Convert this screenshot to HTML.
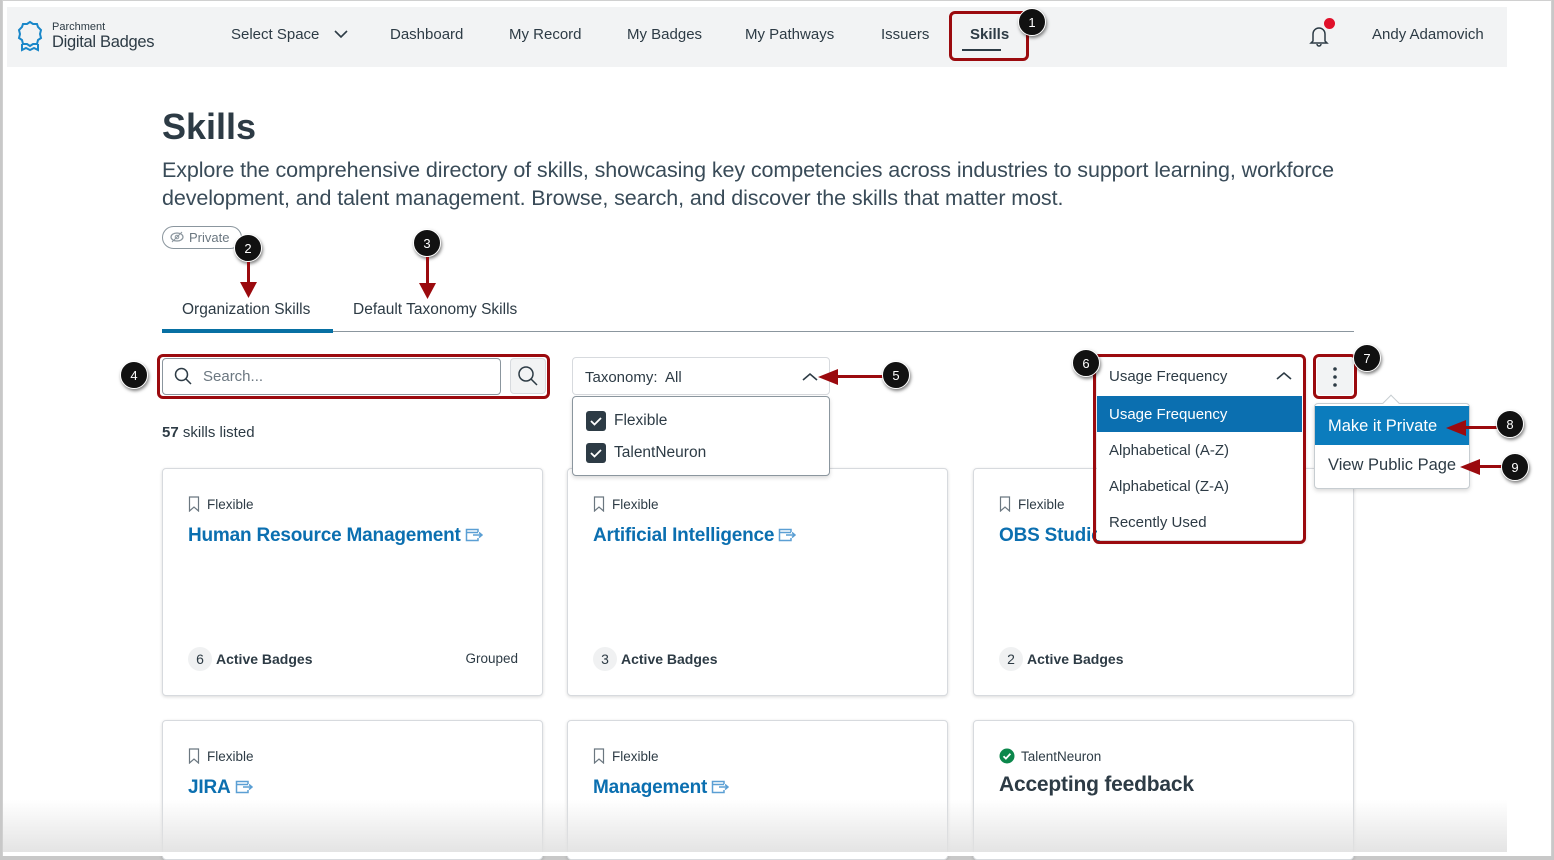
<!DOCTYPE html>
<html><head><meta charset="utf-8"><style>
*{box-sizing:border-box;margin:0;padding:0}
body{width:1554px;height:859px;overflow:hidden;background:#c8c8c8;font-family:"Liberation Sans",sans-serif;color:#2d3b45;position:relative}
.frame{position:absolute;left:2px;top:0;width:1550px;height:856px;background:#fff;border:1px solid #d0d0d0}
.a{position:absolute;white-space:nowrap}
.nav{position:absolute;left:7px;top:7px;width:1500px;height:60px;background:#f2f3f4}
.nl{position:absolute;top:26px;font-size:15px;color:#2d3b45}
.badge{position:absolute;width:28px;height:28px;border-radius:50%;background:#111;color:#fff;font-size:13px;text-align:center;line-height:28px;border:1.5px solid #fff;box-shadow:1px 2px 3px rgba(0,0,0,.5);z-index:8}
.red{position:absolute;border:3px solid #9b0a0e;border-radius:6px;z-index:4}
.card{position:absolute;width:381px;background:#fff;border:1px solid #d7dade;border-radius:4px;box-shadow:0 1px 3px rgba(0,0,0,.15)}
.tag{position:absolute;left:25px;top:27px;font-size:13.5px;color:#2d3b45}
.ttl{position:absolute;left:25px;top:56px;font-size:19px;font-weight:bold;color:#0b6fb0;white-space:nowrap;letter-spacing:-0.2px}
.cnt{position:absolute;left:25px;top:178px;font-size:14px;font-weight:bold}
.cnt b{display:inline-block;width:24px;height:24px;border-radius:50%;background:#f0f1f2;text-align:center;line-height:24px;font-weight:normal;margin-right:4px}
.bm{vertical-align:-3px;margin-right:7px}
.ext{vertical-align:-1px;margin-left:4px}
.arrow{position:absolute;background:#9b0a0e;z-index:8}
</style></head><body>
<div class="frame"></div>
<div class="nav"></div>
<svg class="a" style="left:16px;top:20px" width="28" height="32" viewBox="0 0 28 32"><path d="M14 2l3 2 4 0 1 3 3 3-1 4 1 4-3 2-1 4-4 0-3 2-3-2-4 0-1-4-3-2 1-4-1-4 3-3 1-3 4 0z" fill="none" stroke="#1a87c9" stroke-width="2"/><path d="M6 24v6l4-2 4 2 4-2 4 2v-6" fill="none" stroke="#1a87c9" stroke-width="2"/></svg>
<div class="a" style="left:52px;top:21px;font-size:11px">Parchment</div>
<div class="a" style="left:52px;top:33px;font-size:16.5px;color:#2d3b45;letter-spacing:-0.3px">Digital Badges</div>
<div class="nl" style="left:231px">Select Space</div>
<svg class="a" style="left:334px;top:29px" width="14" height="10"><path d="M1 2l6 6 6-6" fill="none" stroke="#2d3b45" stroke-width="1.6"/></svg>
<div class="nl" style="left:390px">Dashboard</div>
<div class="nl" style="left:509px">My Record</div>
<div class="nl" style="left:627px">My Badges</div>
<div class="nl" style="left:745px">My Pathways</div>
<div class="nl" style="left:881px">Issuers</div>
<div class="nl" style="left:970px;font-weight:bold">Skills</div>
<div class="a" style="left:962px;top:49px;width:39px;height:2px;background:#2d3b45"></div>
<div class="red" style="left:949px;top:11px;width:80px;height:50px"></div>
<div class="badge" style="left:1018px;top:8px">1</div>
<svg class="a" style="left:1308px;top:24px" width="22" height="24"><path d="M5 17V10a6 6 0 0112 0v7l2 2H3z M9 20a2 2 0 004 0" fill="none" stroke="#2d3b45" stroke-width="1.5"/></svg>
<div class="a" style="left:1324px;top:18px;width:11px;height:11px;border-radius:50%;background:#e0102a"></div>
<div class="nl" style="left:1372px">Andy Adamovich</div>

<div class="a" style="left:162px;top:106px;font-size:36px;font-weight:bold;color:#2d3b45">Skills</div>
<div class="a" style="left:162px;top:156px;font-size:21.5px;line-height:28px;color:#394b58;white-space:normal;width:1230px;letter-spacing:-0.1px">Explore the comprehensive directory of skills, showcasing key competencies across industries to support learning, workforce development, and talent management. Browse, search, and discover the skills that matter most.</div>
<div class="a" style="left:162px;top:226px;width:80px;height:23px;border:1px solid #8b969e;border-radius:12px;font-size:13px;color:#6b7780;padding:3px 0 0 26px">Private</div>
<svg class="a" style="left:170px;top:231px" width="14" height="12"><ellipse cx="7" cy="6" rx="6" ry="4" fill="none" stroke="#8b969e" stroke-width="1.2"/><circle cx="7" cy="6" r="1.8" fill="none" stroke="#8b969e"/><path d="M2 11L12 1" stroke="#8b969e"/></svg>
<div class="badge" style="left:234px;top:234px">2</div>
<div class="arrow" style="left:247px;top:262px;width:3px;height:24px"></div>
<svg class="a" style="left:240px;top:282px;z-index:8" width="17" height="16"><path d="M0 0h17L8.5 16z" fill="#9b0a0e"/></svg>
<div class="badge" style="left:413px;top:229px">3</div>
<div class="arrow" style="left:426px;top:257px;width:3px;height:28px"></div>
<svg class="a" style="left:419px;top:283px;z-index:8" width="17" height="16"><path d="M0 0h17L8.5 16z" fill="#9b0a0e"/></svg>
<div class="a" style="left:182px;top:301px;font-size:15.5px">Organization Skills</div>
<div class="a" style="left:353px;top:301px;font-size:15.5px">Default Taxonomy Skills</div>
<div class="a" style="left:162px;top:331px;width:1192px;height:1px;background:#8b969e"></div>
<div class="a" style="left:162px;top:329px;width:171px;height:4px;background:#0770a3"></div>

<div class="a" style="left:162px;top:358px;width:339px;height:37px;border:1px solid #8b969e;border-radius:4px"></div>
<svg class="a" style="left:174px;top:367px" width="18" height="18"><circle cx="7.5" cy="7.5" r="6" fill="none" stroke="#2d3b45" stroke-width="1.5"/><path d="M12 12l5 5" stroke="#2d3b45" stroke-width="1.5"/></svg>
<div class="a" style="left:203px;top:368px;font-size:15px;color:#6b7780">Search...</div>
<div class="a" style="left:510px;top:358px;width:36px;height:36px;background:#f2f3f4;border:1px solid #d7dade;border-radius:4px"></div>
<svg class="a" style="left:517px;top:365px" width="22" height="22"><circle cx="9" cy="9" r="7" fill="none" stroke="#2d3b45" stroke-width="1.5"/><path d="M14 14l6 6" stroke="#2d3b45" stroke-width="1.5"/></svg>
<div class="red" style="left:157px;top:354px;width:393px;height:45px"></div>
<div class="badge" style="left:120px;top:361px">4</div>
<div class="a" style="left:162px;top:424px;font-size:15px"><b>57</b> skills listed</div>

<div class="a" style="left:572px;top:357px;width:258px;height:38px;border:1px solid #d7dade;border-radius:4px"></div>
<div class="a" style="left:585px;top:369px;font-size:15px">Taxonomy:&nbsp; All</div>
<svg class="a" style="left:802px;top:372px" width="16" height="10"><path d="M1 8l7-6 7 6" fill="none" stroke="#2d3b45" stroke-width="1.6"/></svg>
<svg class="a" style="left:818px;top:369px;z-index:8" width="20" height="16"><path d="M0 8L20 0v16z" fill="#9b0a0e"/></svg>
<div class="arrow" style="left:836px;top:375px;width:48px;height:3px"></div>
<div class="badge" style="left:882px;top:361px">5</div>

<svg width="0" height="0" style="position:absolute"><defs>
<symbol id="bm" viewBox="0 0 12 16"><path d="M1.5 1h9v14l-4.5-4-4.5 4z" fill="none" stroke="#6b7780" stroke-width="1.2"/></symbol>
<symbol id="ext" viewBox="0 0 18 14"><path d="M13 4V1.5H1.5v11H13V10M1.5 4.5H13M8 7h9M14 4.5L17 7l-3 2.5" fill="none" stroke="#5b9fd4" stroke-width="1.5"/></symbol>
</defs></svg>

<div class="card" style="left:162px;top:468px;height:228px">
<div class="tag"><svg class="bm" width="12" height="16"><use href="#bm"/></svg>Flexible</div>
<div class="ttl">Human Resource Management<svg class="ext" width="18" height="14"><use href="#ext"/></svg></div>
<div class="cnt"><b>6</b>Active Badges</div>
<div class="a" style="right:24px;top:182px;font-size:13.5px">Grouped</div></div>
<div class="card" style="left:567px;top:468px;height:228px">
<div class="tag"><svg class="bm" width="12" height="16"><use href="#bm"/></svg>Flexible</div>
<div class="ttl">Artificial Intelligence<svg class="ext" width="18" height="14"><use href="#ext"/></svg></div>
<div class="cnt"><b>3</b>Active Badges</div></div>
<div class="card" style="left:973px;top:468px;height:228px">
<div class="tag"><svg class="bm" width="12" height="16"><use href="#bm"/></svg>Flexible</div>
<div class="ttl">OBS Studio</div>
<div class="cnt"><b>2</b>Active Badges</div></div>
<div class="card" style="left:162px;top:720px;height:140px">
<div class="tag"><svg class="bm" width="12" height="16"><use href="#bm"/></svg>Flexible</div>
<div class="ttl">JIRA<svg class="ext" width="18" height="14"><use href="#ext"/></svg></div></div>
<div class="card" style="left:567px;top:720px;height:140px">
<div class="tag"><svg class="bm" width="12" height="16"><use href="#bm"/></svg>Flexible</div>
<div class="ttl">Management<svg class="ext" width="18" height="14"><use href="#ext"/></svg></div></div>
<div class="card" style="left:973px;top:720px;height:140px">
<div class="tag"><svg width="16" height="16" style="vertical-align:-3px;margin-right:6px"><circle cx="8" cy="8" r="7.5" fill="#0b874b"/><path d="M4.5 8.2l2.4 2.4 4.5-4.8" fill="none" stroke="#fff" stroke-width="1.8"/></svg>TalentNeuron</div>
<div class="ttl" style="color:#2d3b45;top:52px;font-size:21px">Accepting feedback</div></div>

<div class="a" style="left:572px;top:396px;width:258px;height:80px;background:#fff;border:1px solid #8b969e;border-radius:4px;box-shadow:0 2px 4px rgba(0,0,0,.15)"></div>
<div class="a" style="left:586px;top:411px;width:20px;height:20px;background:#2d3b45;border-radius:3px"></div>
<div class="a" style="left:586px;top:443px;width:20px;height:20px;background:#2d3b45;border-radius:3px"></div>
<svg class="a" style="left:586px;top:411px" width="20" height="52"><path d="M5 10l3.5 3.5L15 7M5 42l3.5 3.5L15 39" fill="none" stroke="#fff" stroke-width="1.8"/></svg>
<div class="a" style="left:614px;top:412px;font-size:15.5px">Flexible</div>
<div class="a" style="left:614px;top:444px;font-size:15.5px">TalentNeuron</div>

<div class="a" style="left:1097px;top:358px;width:208px;height:182px;background:#fff;box-shadow:0 2px 4px rgba(0,0,0,.2)"></div>
<div class="a" style="left:1109px;top:368px;font-size:15px">Usage Frequency</div>
<svg class="a" style="left:1276px;top:371px" width="16" height="10"><path d="M1 8l7-6 7 6" fill="none" stroke="#2d3b45" stroke-width="1.6"/></svg>
<div class="a" style="left:1097px;top:396px;width:205px;height:36px;background:#0b6fb0"></div>
<div class="a" style="left:1109px;top:406px;font-size:15px;color:#fff">Usage Frequency</div>
<div class="a" style="left:1109px;top:442px;font-size:15px">Alphabetical (A-Z)</div>
<div class="a" style="left:1109px;top:478px;font-size:15px">Alphabetical (Z-A)</div>
<div class="a" style="left:1109px;top:514px;font-size:15px">Recently Used</div>
<div class="red" style="left:1093px;top:354px;width:213px;height:190px"></div>
<div class="badge" style="left:1072px;top:349px">6</div>

<div class="a" style="left:1317px;top:357px;width:36px;height:38px;background:#f2f3f4;border-radius:4px"></div>
<svg class="a" style="left:1330px;top:366px" width="10" height="22"><circle cx="5" cy="3" r="1.8" fill="#2d3b45"/><circle cx="5" cy="11" r="1.8" fill="#2d3b45"/><circle cx="5" cy="19" r="1.8" fill="#2d3b45"/></svg>
<div class="red" style="left:1313px;top:354px;width:44px;height:45px"></div>
<div class="badge" style="left:1353px;top:344px">7</div>
<div class="a" style="left:1314px;top:403px;width:156px;height:86px;background:#fff;border:1px solid #c7cdd1;border-radius:4px;box-shadow:0 2px 4px rgba(0,0,0,.15)"></div>
<div class="a" style="left:1385px;top:397px;width:12px;height:12px;background:#fff;border-left:1px solid #c7cdd1;border-top:1px solid #c7cdd1;transform:rotate(45deg)"></div>
<div class="a" style="left:1315px;top:406px;width:154px;height:39px;background:#0b7cbd"></div>
<div class="a" style="left:1328px;top:417px;font-size:16.5px;color:#fff">Make it Private</div>
<div class="a" style="left:1328px;top:456px;font-size:16.5px">View Public Page</div>
<svg class="a" style="left:1446px;top:420px;z-index:8" width="20" height="16"><path d="M0 8L20 0v16z" fill="#9b0a0e"/></svg>
<div class="arrow" style="left:1464px;top:426px;width:34px;height:3px"></div>
<div class="badge" style="left:1496px;top:410px">8</div>
<svg class="a" style="left:1460px;top:459px;z-index:8" width="20" height="16"><path d="M0 8L20 0v16z" fill="#9b0a0e"/></svg>
<div class="arrow" style="left:1478px;top:465px;width:24px;height:3px"></div>
<div class="badge" style="left:1501px;top:453px">9</div>

<div class="a" style="left:3px;top:800px;width:1504px;height:52px;background:linear-gradient(rgba(240,240,240,0),rgba(225,225,225,.9));z-index:6"></div>
<div class="a" style="left:1507px;top:520px;width:44px;height:335px;background:#fff;z-index:7"></div>
<div class="a" style="left:3px;top:852px;width:1548px;height:4px;background:#fff;z-index:7"></div>
</body></html>
